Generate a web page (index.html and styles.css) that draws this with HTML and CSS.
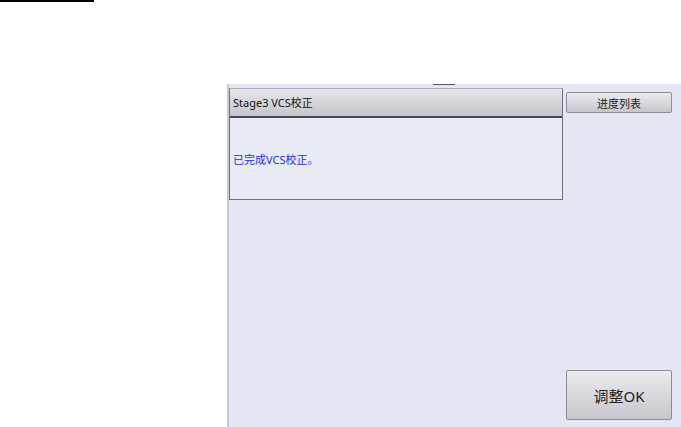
FILE: index.html
```html
<!DOCTYPE html>
<html lang="zh-CN">

<head>
    <meta charset="UTF-8">
    <title>Stage3 VCS校正</title>
    <link rel="stylesheet" href="styles.css">
</head>

<body>
    <!-- 左上角的标记线 -->
    <div class="top-rule"></div>

    <!-- 主面板 -->
    <div class="panel">
        <div class="notch"></div>

        <div class="dialog">
            <div class="dialog-head">Stage3 VCS校正</div>
            <div class="dialog-body">
                <span class="msg">已完成VCS校正。</span>
            </div>
        </div>

        <div class="side">
            <button class="btn btn-small">进度列表</button>
            <button class="btn btn-big">调整OK</button>
        </div>
    </div>
</body>

</html>
```

FILE: styles.css
```css
body {
    margin: 0;
    width: 681px;
    height: 427px;
    background-color: #fff;
    font-family: "Noto Sans", "Noto Sans CJK SC", sans-serif;
    overflow: hidden;
}

.top-rule {
    width: 94px;
    height: 2px;
    background-color: #000;
}

.panel {
    position: relative;
    margin: 82px 0 0 227px;
    height: 343px;
    background-color: #e4e6f3;
    border-left: 2px solid #c9c9d3;
    display: grid;
    grid-template-columns: 334px 106px;
    column-gap: 3px;
    padding-top: 4px;
    box-sizing: border-box;
}

/* 面板顶部的小短线 */
.notch {
    position: absolute;
    top: 0;
    left: 204px;
    width: 22px;
    height: 1px;
    background-color: #55565c;
}

.dialog {
    height: 112px;
    border: 1px solid #6f717a;
    border-top-color: #a9aab2;
    display: flex;
    flex-direction: column;
    box-sizing: border-box;
}

.dialog-head {
    height: 27px;
    line-height: 27px;
    padding-left: 3px;
    font-size: 11px;
    color: #111;
    background: linear-gradient(#e6e6ea, #c4c4ca);
    border-bottom: 2px solid #45464d;
}

.dialog-body {
    flex: 1;
    display: flex;
    align-items: center;
    padding-left: 3px;
    background-color: #e8eaf4;
}

.msg {
    font-size: 11px;
    color: #2a2ae0;
}

.side {
    display: flex;
    flex-direction: column;
    justify-content: space-between;
    padding: 4px 0 7px;
}

.btn {
    font-family: inherit;
    color: #222;
    border: 1px solid #8c8d95;
    border-radius: 2px;
    background: linear-gradient(#ebebef, #c6c6cc);
    padding: 0;
}

.btn-small {
    height: 21px;
    font-size: 11px;
}

.btn-big {
    height: 50px;
    font-size: 15px;
}
```
